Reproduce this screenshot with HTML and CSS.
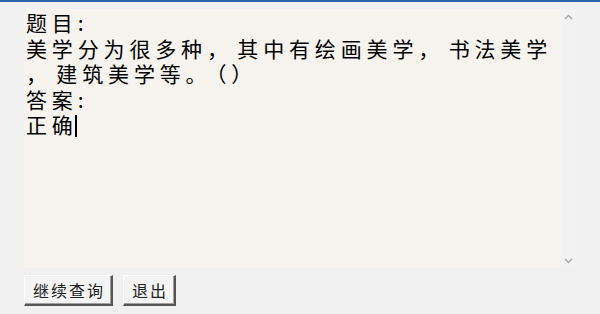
FILE: index.html
```html
<!DOCTYPE html>
<html lang="zh-CN">
<head>
<meta charset="utf-8">
<title>题目</title>
<link rel="stylesheet" href="styles.css">
</head>
<body>
<div class="topline"></div>
<div class="main">
  <div class="editor">
    <div class="text">
      <div class="line">题目:</div>
      <div class="line">美学分为很多种<span class="p">，</span>其中有绘画美学<span class="p">，</span>书法美学</div>
      <div class="line"><span class="p">，</span>建筑美学等<span class="p">。</span>（）</div>
      <div class="line">答案:</div>
      <div class="line">正确<span class="caret"></span></div>
    </div>
  </div>
  <div class="scrollbar">
    <svg class="arrow" width="9" height="6" viewBox="0 0 9 6"><path d="M1 5 L4.5 1.5 L8 5" fill="none" stroke="#a6a6a6" stroke-width="1.4"/></svg>
    <svg class="arrow" width="9" height="6" viewBox="0 0 9 6"><path d="M1 1 L4.5 4.5 L8 1" fill="none" stroke="#a6a6a6" stroke-width="1.4"/></svg>
  </div>
</div>
<div class="buttons">
  <button class="btn">继续查询</button>
  <button class="btn">退出</button>
</div>
</body>
</html>
```
FILE: styles.css
```css
html, body {
  margin: 0;
  padding: 0;
}
body {
  width: 600px;
  height: 314px;
  background: #f0f0f0;
  overflow: hidden;
  font-family: "Noto Sans CJK SC", "Noto Sans", sans-serif;
}
.topline {
  height: 2px;
  background: #2a64b0;
}
.main {
  display: flex;
  margin-top: 7px;
  padding-left: 24px;
  height: 259px;
}
.editor {
  width: 537px;
  height: 259px;
  background: #f7f3ee;
  box-sizing: border-box;
  padding: 1px 0 0 2px;
}
.text {
  font-size: 21px;
  line-height: 25.5px;
  letter-spacing: 4.85px;
  color: #000;
}
.line {
  white-space: nowrap;
  height: 25.5px;
}
.p {
  margin-right: 4.5px;
}
.caret {
  display: inline-block;
  width: 2px;
  height: 22px;
  background: #000;
  vertical-align: -4px;
  margin-left: -3px;
}
.scrollbar {
  width: 15px;
  background: #f2f2f2;
  display: flex;
  flex-direction: column;
  justify-content: space-between;
  align-items: center;
  padding: 5px 0 4px;
  box-sizing: border-box;
}
.arrow {
  display: block;
}
.buttons {
  display: flex;
  gap: 10px;
  padding-left: 24px;
  margin-top: 7px;
}
.btn {
  height: 31px;
  padding: 0 6px 0 8px;
  background: #f4f4f4;
  border: 0;
  border-top: 1px solid #ffffff;
  border-left: 1px solid #ffffff;
  border-right: 2px solid #555;
  border-bottom: 2px solid #555;
  box-shadow: inset -1px -1px 0 #a0a0a0;
  font-family: "Noto Sans CJK SC", sans-serif;
  font-size: 16px;
  letter-spacing: 2px;
  color: #222;
  line-height: 28px;
}
```
